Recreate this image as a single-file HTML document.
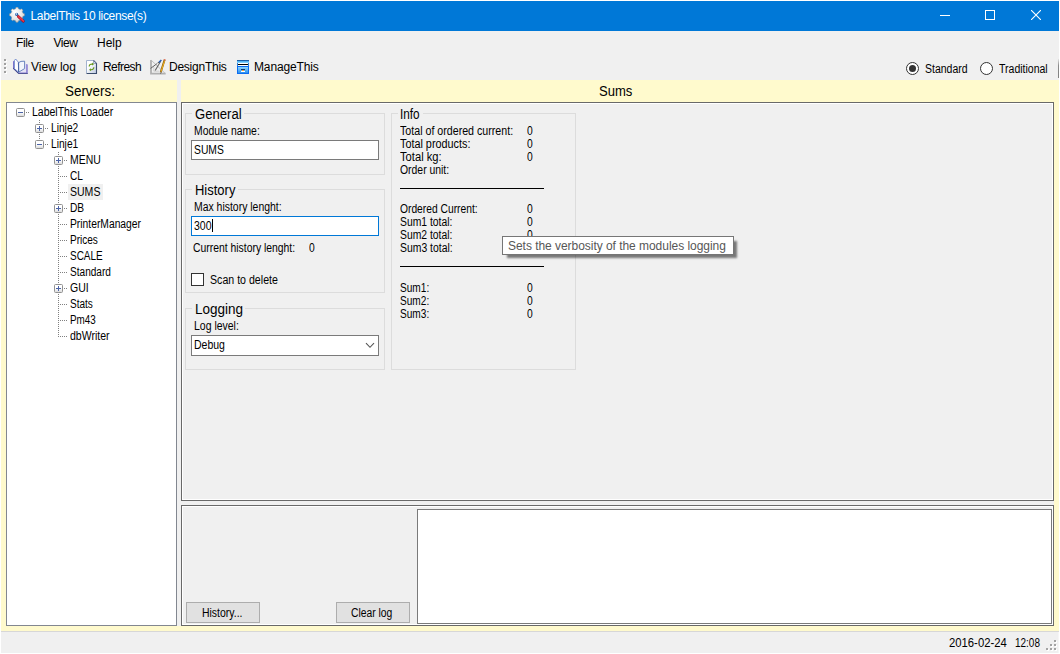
<!DOCTYPE html>
<html>
<head>
<meta charset="utf-8">
<title>LabelThis 10 license(s)</title>
<style>
html,body{margin:0;padding:0;}
body{width:1060px;height:654px;overflow:hidden;background:#fff;position:relative;
  font-family:"Liberation Sans",sans-serif;font-size:12px;color:#000;}
.abs{position:absolute;}
.t{position:absolute;white-space:nowrap;line-height:1;transform-origin:0 0;}
/* window chrome */
#title{left:1px;top:1px;width:1058px;height:30px;background:#0078d7;}
#bg{left:1px;top:31px;width:1057px;height:49px;background:#f0f0f0;}
#bgedge{left:1058px;top:31px;width:1px;height:49px;background:#f0f0f0;}
#yl{left:1px;top:80px;width:1058px;height:551px;background:#fffacd;}
#yr{left:181px;top:80px;width:878px;height:551px;background:#fffacd;}
#vsplit{left:177px;top:80px;width:4px;height:546px;background:#f0f0f0;}
#sline{left:1px;top:631px;width:1058px;height:1px;background:#d7d7d7;}
#status{left:1px;top:632px;width:1057px;height:21px;background:#f0f0f0;}
#statusedge{left:1058px;top:632px;width:1px;height:21px;background:#f6f6f6;}
/* panels */
#tree{left:6px;top:102px;width:169px;height:522px;background:#fff;border:1px solid #828790;}
.p3d{background:#f0f0f0;border:1px solid #696969;box-shadow:inset 1px 1px 0 #fff,inset -1px -1px 0 #fff;}
#ptop{left:181px;top:102px;width:871px;height:397px;}
#hsplit{left:181px;top:501px;width:873px;height:4px;background:#f0f0f0;}
#pbot{left:181px;top:505px;width:871px;height:119px;}
.grp{border:1px solid #dcdcdc;}
.grp .cap{position:absolute;top:-5px;left:6px;height:10px;background:#f0f0f0;}
.tb{background:#fff;border:1px solid #7a7a7a;}
.btn{background:#e1e1e1;border:1px solid #adadad;}
.s13{font-size:14px;}
.s12{font-size:12px;}
.dotv{position:absolute;width:1px;background-image:linear-gradient(#808080 50%,transparent 50%);background-size:1px 2px;}
.doth{position:absolute;height:1px;background-image:linear-gradient(90deg,#808080 50%,transparent 50%);background-size:2px 1px;}
.pm{position:absolute;width:7px;height:7px;border:1px solid #919191;background:linear-gradient(#fff 45%,#dcdcdc);border-radius:1.5px;}
.pm i{position:absolute;left:1px;top:3px;width:5px;height:1px;background:#4b63a7;}
.pm b{position:absolute;left:3px;top:1px;width:1px;height:5px;background:#4b63a7;}
</style>
</head>
<body>
<!-- backgrounds -->
<div class="abs" id="title"></div>
<div class="abs" id="bg"></div>
<div class="abs" id="bgedge"></div>
<div class="abs" id="yl"></div>
<div class="abs" id="yr"></div>
<div class="abs" id="vsplit"></div>
<div class="abs" id="sline"></div>
<div class="abs" id="status"></div>
<div class="abs" id="statusedge"></div>

<!-- TITLEBAR -->
<div id="sec-title">
<svg class="abs" style="left:9px;top:7px;" width="17" height="17" viewBox="0 0 17 17">
<defs><radialGradient id="gg" cx="0.4" cy="0.35" r="0.75"><stop offset="0" stop-color="#ffffff"/><stop offset="0.6" stop-color="#e6e6e6"/><stop offset="1" stop-color="#c4c4c4"/></radialGradient></defs>
<path d="M6.55 1.77L7.00 0.37L9.00 0.37L9.45 1.77L11.24 2.51L12.55 1.84L13.96 3.25L13.29 4.56L14.03 6.35L15.43 6.80L15.43 8.80L14.03 9.25L13.29 11.04L13.96 12.35L12.55 13.76L11.24 13.09L9.45 13.83L9.00 15.23L7.00 15.23L6.55 13.83L4.76 13.09L3.45 13.76L2.04 12.35L2.71 11.04L1.97 9.25L0.57 8.80L0.57 6.80L1.97 6.35L2.71 4.56L2.04 3.25L3.45 1.84L4.76 2.51Z" fill="url(#gg)" stroke="#8d8d8d" stroke-width="0.5" stroke-linejoin="round"/>
<path d="M3.2 3.2L7.6 7.4" stroke="#fff" stroke-width="0.8"/>
<circle cx="7.6" cy="7.3" r="1.6" fill="#1f5fae"/>
<circle cx="7.3" cy="7.1" r="0.75" fill="#fff"/>
<path d="M9.3 9.5L14.4 14.2" stroke="#8e0f1b" stroke-width="2.7" stroke-linecap="round"/>
<path d="M9.3 9.5L14.4 14.2" stroke="#e32639" stroke-width="1.8" stroke-linecap="round"/>
<path d="M9.7 9.4L14.5 13.8" stroke="#f7b0b6" stroke-width="0.6" stroke-dasharray="0.7 0.8"/>
</svg>
<span class="t s12" style="left:30.5px;top:10px;color:#fff;letter-spacing:-0.33px;">LabelThis 10 license(s)</span>
<div class="abs" style="left:940px;top:15px;width:10px;height:1px;background:#fff;"></div>
<div class="abs" style="left:985px;top:10px;width:8px;height:8px;border:1px solid #fff;"></div>
<svg class="abs" style="left:1031px;top:10px;" width="10" height="10" viewBox="0 0 10 10"><path d="M0 0L10 10M10 0L0 10" stroke="#fff" stroke-width="1.1" fill="none"/></svg>
</div>

<!-- MENU -->
<div id="sec-menu">
<span class="t s12" style="left:16px;top:37px;letter-spacing:-0.4px;">File</span>
<span class="t s12" style="left:53.5px;top:37px;letter-spacing:-0.43px;">View</span>
<span class="t s12" style="left:97px;top:37px;letter-spacing:-0.03px;">Help</span>
</div>

<!-- TOOLBAR -->
<div id="sec-toolbar">
<div class="abs" style="left:5px;top:60px;width:2px;height:2px;background:#fff;"></div><div class="abs" style="left:4px;top:59px;width:2px;height:2px;background:#a0a0a0;"></div><div class="abs" style="left:5px;top:64px;width:2px;height:2px;background:#fff;"></div><div class="abs" style="left:4px;top:63px;width:2px;height:2px;background:#a0a0a0;"></div><div class="abs" style="left:5px;top:68px;width:2px;height:2px;background:#fff;"></div><div class="abs" style="left:4px;top:67px;width:2px;height:2px;background:#a0a0a0;"></div><div class="abs" style="left:5px;top:72px;width:2px;height:2px;background:#fff;"></div><div class="abs" style="left:4px;top:71px;width:2px;height:2px;background:#a0a0a0;"></div>
<svg class="abs" style="left:12px;top:58px;" width="17" height="17" viewBox="0 0 17 17">
<path d="M1 3.4L2.4 2.4L2.4 10.4L6.6 14.6L6.6 15.6L15.6 15.6L15.6 6.2L13 5.4L13 10.8L6.6 14.2L1 10.6Z" fill="#e4e2f5"/>
<path d="M1 3.4L2.4 2.4L2.4 10.4L6.4 14.2L6.4 15.6L1 10.8Z" fill="#7d71cc"/>
<path d="M14.2 5.9L15.7 6.5L15.7 15.7L6.4 15.7L6.4 14.5L14.2 14.5Z" fill="#8579d0"/>
<path d="M1 10.4L6.2 15.8L15.8 15.8L15.8 15L6.6 15L1 9.6Z" fill="#3b4283"/>
<path d="M2.4 2.6L3.6 1L6.4 4.2L6.6 14.2L2.4 10.6Z" fill="#fdfdff" stroke="#6b86c9" stroke-width="0.9" stroke-linejoin="round"/>
<path d="M6.6 4.6L9 3.4L12.6 3.2L12.6 10.6L6.6 14.2Z" fill="#f3f6fc" stroke="#5b78b8" stroke-width="0.9" stroke-linejoin="round"/>
<path d="M6.5 4.4L6.6 14.2" stroke="#4b68a8" stroke-width="1.1"/>
</svg>
<svg class="abs" style="left:86px;top:60px;" width="12" height="14" viewBox="0 0 12 14">
<defs><linearGradient id="pg" x1="0" y1="0" x2="1" y2="1"><stop offset="0.35" stop-color="#ffffff"/><stop offset="1" stop-color="#b9c6e0"/></linearGradient></defs>
<path d="M0.5 0.5L7.5 0.5L10.5 3.5L10.5 13.5L0.5 13.5Z" fill="url(#pg)"/>
<path d="M0.5 13L0.5 0.5L7.5 0.5" fill="none" stroke="#a3b3cf" stroke-width="1"/>
<path d="M7.5 0.5L10.5 3.5L10.5 13.5L0.5 13.5" fill="none" stroke="#3a4d6d" stroke-width="1.1"/>
<path d="M7.5 0.8L7.5 3.5L10.3 3.5Z" fill="#dfe6f3" stroke="#5a6d8f" stroke-width="0.5"/>
<path d="M3.2 6.6C3.2 4.6 4.6 3.9 6.6 4.1" fill="none" stroke="#6a9a1f" stroke-width="1.2"/>
<path d="M6 2.6L8 4.2L6 5.6Z" fill="#6a9a1f"/>
<path d="M7.8 7.2C7.8 9.2 6.4 9.9 4.4 9.7" fill="none" stroke="#6a9a1f" stroke-width="1.2"/>
<path d="M5 8.2L3 9.7L5 11.2Z" fill="#6a9a1f"/>
</svg>
<svg class="abs" style="left:150px;top:59px;" width="17" height="16" viewBox="0 0 17 16">
<path d="M1 1L1 14.6L15.6 14.6" fill="none" stroke="#b0b0b0" stroke-width="1.8"/>
<path d="M1 1L15.4 14.6" stroke="#b9b9b9" stroke-width="0.9"/>
<path d="M3.8 7.4L3.8 12.2L9.2 12.2" fill="none" stroke="#c6c6c6" stroke-width="0.8"/>
<path d="M10.8 1.8L0.6 9.4" stroke="#606060" stroke-width="1"/>
<path d="M10.6 2.2L5.2 11.6" stroke="#606060" stroke-width="1.1"/>
<path d="M11.4 1L9 3.4" stroke="#2b5fb4" stroke-width="1.5"/>
<circle cx="7.6" cy="5" r="0.8" fill="#f4f4f4"/>
<path d="M14.6 0.8L10.7 13.2" stroke="#7a5a10" stroke-width="1.9"/>
<path d="M14.6 1.6L10.9 12.8" stroke="#efab1c" stroke-width="1.1"/>
<path d="M14.9 0.2L14.5 1.6" stroke="#e0705a" stroke-width="1.8"/>
<path d="M10.9 12.6L10.4 15L11.6 13.2Z" fill="#d9b38c" stroke="#444" stroke-width="0.3"/>
</svg>
<svg class="abs" style="left:237px;top:60px;" width="12" height="14" viewBox="0 0 12 14" shape-rendering="crispEdges">
<defs><linearGradient id="mg1" x1="0" y1="0" x2="0" y2="1"><stop offset="0" stop-color="#3aa8f3"/><stop offset="1" stop-color="#9bdcfb"/></linearGradient>
<linearGradient id="mg2" x1="0" y1="0" x2="0" y2="1"><stop offset="0" stop-color="#8fd6fa"/><stop offset="1" stop-color="#2b8ff0"/></linearGradient></defs>
<rect x="0" y="0" width="12" height="1" fill="#1f5ea6"/>
<rect x="0" y="1" width="12" height="2" fill="url(#mg1)"/>
<rect x="0" y="3" width="12" height="3" fill="#fff"/>
<rect x="0" y="3" width="1" height="3" fill="#2f7fd6"/><rect x="11" y="3" width="1" height="3" fill="#2f7fd6"/>
<rect x="1" y="4" width="10" height="1" fill="#000"/>
<rect x="0" y="6" width="12" height="8" fill="#0b6cf2"/>
<rect x="1" y="7" width="10" height="6" fill="url(#mg2)"/>
<rect x="4" y="9" width="4" height="1" fill="#12386e"/>
<rect x="5" y="10" width="2" height="1" fill="#f29a3a"/>
<rect x="4" y="11" width="4" height="1" fill="#fff"/>
</svg>
<div class="abs" style="left:906px;top:62px;width:11px;height:11px;border:1px solid #333;border-radius:50%;background:#fff;"></div>
<div class="abs" style="left:909px;top:65px;width:7px;height:7px;border-radius:50%;background:#333;"></div>
<div class="abs" style="left:980px;top:62px;width:11px;height:11px;border:1px solid #333;border-radius:50%;background:#fff;"></div>
<div class="abs" style="left:1058px;top:59px;width:1px;height:19px;background:linear-gradient(#e4e4e4,#8a8a8a 35%,#808080);"></div>
<span class="t s12" style="left:31px;top:61px;letter-spacing:-0.03px;">View log</span>
<span class="t s12" style="left:103px;top:61px;letter-spacing:-0.57px;">Refresh</span>
<span class="t s12" style="left:169px;top:61px;letter-spacing:-0.24px;">DesignThis</span>
<span class="t s12" style="left:254px;top:61px;letter-spacing:-0.13px;">ManageThis</span>
<span class="t" style="left:925px;top:63px;transform:scaleX(0.875);">Standard</span>
<span class="t" style="left:998.5px;top:63px;transform:scaleX(0.876);">Traditional</span>
</div>

<!-- HEADERS -->
<span class="t s13" style="left:64.5px;top:84px;transform:scaleX(0.958);">Servers:</span>
<span class="t s13" style="left:598.5px;top:84px;transform:scaleX(0.933);">Sums</span>

<!-- TREE -->
<div class="abs" id="tree"></div>
<div id="sec-tree">
<div class="dotv" style="left:39px;top:120px;height:4px;"></div>
<div class="dotv" style="left:39px;top:134px;height:6px;"></div>
<div class="dotv" style="left:58px;top:152px;height:185px;"></div>
<div class="doth" style="left:26px;top:112px;width:4px;"></div>
<div class="pm" style="left:16px;top:108px;"><i></i></div>
<span class="t tr" style="left:31.5px;top:106px;transform:scaleX(0.875);">LabelThis Loader</span>
<div class="doth" style="left:45px;top:128px;width:4px;"></div>
<div class="pm" style="left:35px;top:124px;"><i></i><b></b></div>
<span class="t tr" style="left:50.5px;top:122px;transform:scaleX(0.85);">Linje2</span>
<div class="doth" style="left:45px;top:144px;width:4px;"></div>
<div class="pm" style="left:35px;top:140px;"><i></i></div>
<span class="t tr" style="left:50.5px;top:138px;transform:scaleX(0.85);">Linje1</span>
<div class="doth" style="left:64px;top:160px;width:4px;"></div>
<div class="pm" style="left:54px;top:156px;"><i></i><b></b></div>
<span class="t tr" style="left:69.5px;top:154px;transform:scaleX(0.869);">MENU</span>
<div class="doth" style="left:60px;top:176px;width:8px;"></div>
<span class="t tr" style="left:69.5px;top:170px;transform:scaleX(0.84);">CL</span>
<div class="abs" style="left:68px;top:184px;width:35px;height:16px;background:#f0f0f0;"></div>
<div class="doth" style="left:60px;top:192px;width:8px;"></div>
<span class="t tr" style="left:69.5px;top:186px;transform:scaleX(0.877);">SUMS</span>
<div class="doth" style="left:64px;top:208px;width:4px;"></div>
<div class="pm" style="left:54px;top:204px;"><i></i><b></b></div>
<span class="t tr" style="left:69.5px;top:202px;transform:scaleX(0.849);">DB</span>
<div class="doth" style="left:60px;top:224px;width:8px;"></div>
<span class="t tr" style="left:69.5px;top:218px;transform:scaleX(0.858);">PrinterManager</span>
<div class="doth" style="left:60px;top:240px;width:8px;"></div>
<span class="t tr" style="left:69.5px;top:234px;transform:scaleX(0.836);">Prices</span>
<div class="doth" style="left:60px;top:256px;width:8px;"></div>
<span class="t tr" style="left:69.5px;top:250px;transform:scaleX(0.831);">SCALE</span>
<div class="doth" style="left:60px;top:272px;width:8px;"></div>
<span class="t tr" style="left:69.5px;top:266px;transform:scaleX(0.841);">Standard</span>
<div class="doth" style="left:64px;top:288px;width:4px;"></div>
<div class="pm" style="left:54px;top:284px;"><i></i><b></b></div>
<span class="t tr" style="left:69.5px;top:282px;transform:scaleX(0.877);">GUI</span>
<div class="doth" style="left:60px;top:304px;width:8px;"></div>
<span class="t tr" style="left:69.5px;top:298px;transform:scaleX(0.837);">Stats</span>
<div class="doth" style="left:60px;top:320px;width:8px;"></div>
<span class="t tr" style="left:69.5px;top:314px;transform:scaleX(0.82);">Pm43</span>
<div class="doth" style="left:60px;top:336px;width:8px;"></div>
<span class="t tr" style="left:69.5px;top:330px;transform:scaleX(0.878);">dbWriter</span>
</div>

<!-- TOP PANEL -->
<div class="abs p3d" id="ptop"></div>
<div class="abs" id="hsplit"></div>
<div class="abs p3d" id="pbot"></div>

<div id="sec-form">
<!-- General -->
<div class="abs grp" style="left:185px;top:113px;width:198px;height:60px;"></div>
<div class="abs" style="left:192px;top:113px;width:52px;height:1px;background:#f0f0f0;"></div>
<span class="t s13" style="left:194.5px;top:107px;transform:scaleX(0.936);">General</span>
<span class="t" style="left:194px;top:125px;transform:scaleX(0.865);">Module name:</span>
<div class="abs tb" style="left:191px;top:140px;width:186px;height:18px;"></div>
<span class="t" style="left:194px;top:144px;transform:scaleX(0.859);">SUMS</span>
<!-- History -->
<div class="abs grp" style="left:185px;top:189px;width:198px;height:102px;"></div>
<div class="abs" style="left:192px;top:189px;width:46px;height:1px;background:#f0f0f0;"></div>
<span class="t s13" style="left:194.5px;top:183px;transform:scaleX(0.927);">History</span>
<span class="t" style="left:194px;top:201px;transform:scaleX(0.87);">Max history lenght:</span>
<div class="abs tb" style="left:191px;top:216px;width:186px;height:18px;border-color:#0078d7;"></div>
<span class="t" style="left:194px;top:220px;transform:scaleX(0.875);">300</span>
<div class="abs" style="left:212px;top:219px;width:1px;height:13px;background:#000;"></div>
<span class="t" style="left:192.5px;top:242px;transform:scaleX(0.865);">Current history lenght:</span>
<span class="t" style="left:308.5px;top:242px;transform:scaleX(0.86);">0</span>
<div class="abs" style="left:191px;top:273px;width:11px;height:11px;background:#fff;border:1px solid #333;"></div>
<span class="t" style="left:209.5px;top:274px;transform:scaleX(0.885);">Scan to delete</span>
<!-- Logging -->
<div class="abs grp" style="left:185px;top:308px;width:198px;height:60px;"></div>
<div class="abs" style="left:192px;top:308px;width:53px;height:1px;background:#f0f0f0;"></div>
<span class="t s13" style="left:194.5px;top:302px;transform:scaleX(0.964);">Logging</span>
<span class="t" style="left:194px;top:320px;transform:scaleX(0.873);">Log level:</span>
<div class="abs tb" style="left:191px;top:335px;width:186px;height:19px;"></div>
<span class="t" style="left:194px;top:339px;transform:scaleX(0.874);">Debug</span>
<svg class="abs" style="left:365px;top:342px;" width="10" height="7" viewBox="0 0 10 7"><path d="M1 1.2L5 5.3L9 1.2" stroke="#555" stroke-width="1.1" fill="none"/></svg>
</div>
<div id="sec-info">
<div class="abs grp" style="left:391px;top:113px;width:183px;height:255px;"></div>
<div class="abs" style="left:398px;top:113px;width:25px;height:1px;background:#f0f0f0;"></div>
<span class="t s13" style="left:400px;top:107px;transform:scaleX(0.84);">Info</span>
<span class="t" style="left:400px;top:125px;transform:scaleX(0.888);">Total of ordered current:</span>
<span class="t" style="left:526.5px;top:125px;transform:scaleX(0.86);">0</span>
<span class="t" style="left:400px;top:138px;transform:scaleX(0.902);">Total products:</span>
<span class="t" style="left:526.5px;top:138px;transform:scaleX(0.86);">0</span>
<span class="t" style="left:400px;top:151px;transform:scaleX(0.932);">Total kg:</span>
<span class="t" style="left:526.5px;top:151px;transform:scaleX(0.86);">0</span>
<span class="t" style="left:399.5px;top:164px;transform:scaleX(0.867);">Order unit:</span>
<span class="t" style="left:399.5px;top:203px;transform:scaleX(0.856);">Ordered Current:</span>
<span class="t" style="left:526.5px;top:203px;transform:scaleX(0.86);">0</span>
<span class="t" style="left:400px;top:216px;transform:scaleX(0.863);">Sum1 total:</span>
<span class="t" style="left:526.5px;top:216px;transform:scaleX(0.86);">0</span>
<span class="t" style="left:400px;top:229px;transform:scaleX(0.863);">Sum2 total:</span>
<span class="t" style="left:526.5px;top:229px;transform:scaleX(0.86);">0</span>
<span class="t" style="left:400px;top:242px;transform:scaleX(0.867);">Sum3 total:</span>
<span class="t" style="left:400px;top:282px;transform:scaleX(0.842);">Sum1:</span>
<span class="t" style="left:526.5px;top:282px;transform:scaleX(0.86);">0</span>
<span class="t" style="left:400px;top:295px;transform:scaleX(0.842);">Sum2:</span>
<span class="t" style="left:526.5px;top:295px;transform:scaleX(0.86);">0</span>
<span class="t" style="left:400px;top:308px;transform:scaleX(0.842);">Sum3:</span>
<span class="t" style="left:526.5px;top:308px;transform:scaleX(0.86);">0</span>
<div class="abs" style="left:400px;top:188px;width:144px;height:1px;background:#000;"></div>
<div class="abs" style="left:400px;top:266px;width:144px;height:1px;background:#000;"></div>
<div class="abs" id="tip" style="left:502px;top:236px;width:230px;height:17px;background:#fff;border:1px solid #767676;box-shadow:4px 4px 2px -1px rgba(0,0,0,0.5);"></div>
<span class="t s12" style="left:508px;top:240px;color:#575757;letter-spacing:-0.04px;">Sets the verbosity of the modules logging</span>
</div>
<div id="sec-bottom">
<div class="abs btn" style="left:186px;top:602px;width:72px;height:19px;"></div>
<span class="t" style="left:202px;top:607px;transform:scaleX(0.871);">History...</span>
<div class="abs btn" style="left:336px;top:602px;width:72px;height:19px;"></div>
<span class="t" style="left:351px;top:607px;transform:scaleX(0.86);">Clear log</span>
<div class="abs tb" style="left:417px;top:509px;width:633px;height:113px;"></div>
</div>
<div id="sec-status">
<div class="abs" style="left:1055px;top:641px;width:2px;height:2px;background:#fff;"></div><div class="abs" style="left:1054px;top:640px;width:2px;height:2px;background:#a3a3a3;"></div><div class="abs" style="left:1051px;top:645px;width:2px;height:2px;background:#fff;"></div><div class="abs" style="left:1050px;top:644px;width:2px;height:2px;background:#a3a3a3;"></div><div class="abs" style="left:1055px;top:645px;width:2px;height:2px;background:#fff;"></div><div class="abs" style="left:1054px;top:644px;width:2px;height:2px;background:#a3a3a3;"></div><div class="abs" style="left:1047px;top:649px;width:2px;height:2px;background:#fff;"></div><div class="abs" style="left:1046px;top:648px;width:2px;height:2px;background:#a3a3a3;"></div><div class="abs" style="left:1051px;top:649px;width:2px;height:2px;background:#fff;"></div><div class="abs" style="left:1050px;top:648px;width:2px;height:2px;background:#a3a3a3;"></div><div class="abs" style="left:1055px;top:649px;width:2px;height:2px;background:#fff;"></div><div class="abs" style="left:1054px;top:648px;width:2px;height:2px;background:#a3a3a3;"></div>
<span class="t" style="left:949px;top:637px;transform:scaleX(0.941);">2016-02-24</span>
<span class="t" style="left:1015px;top:637px;transform:scaleX(0.83);">12:08</span>
</div>
</body>
</html>
